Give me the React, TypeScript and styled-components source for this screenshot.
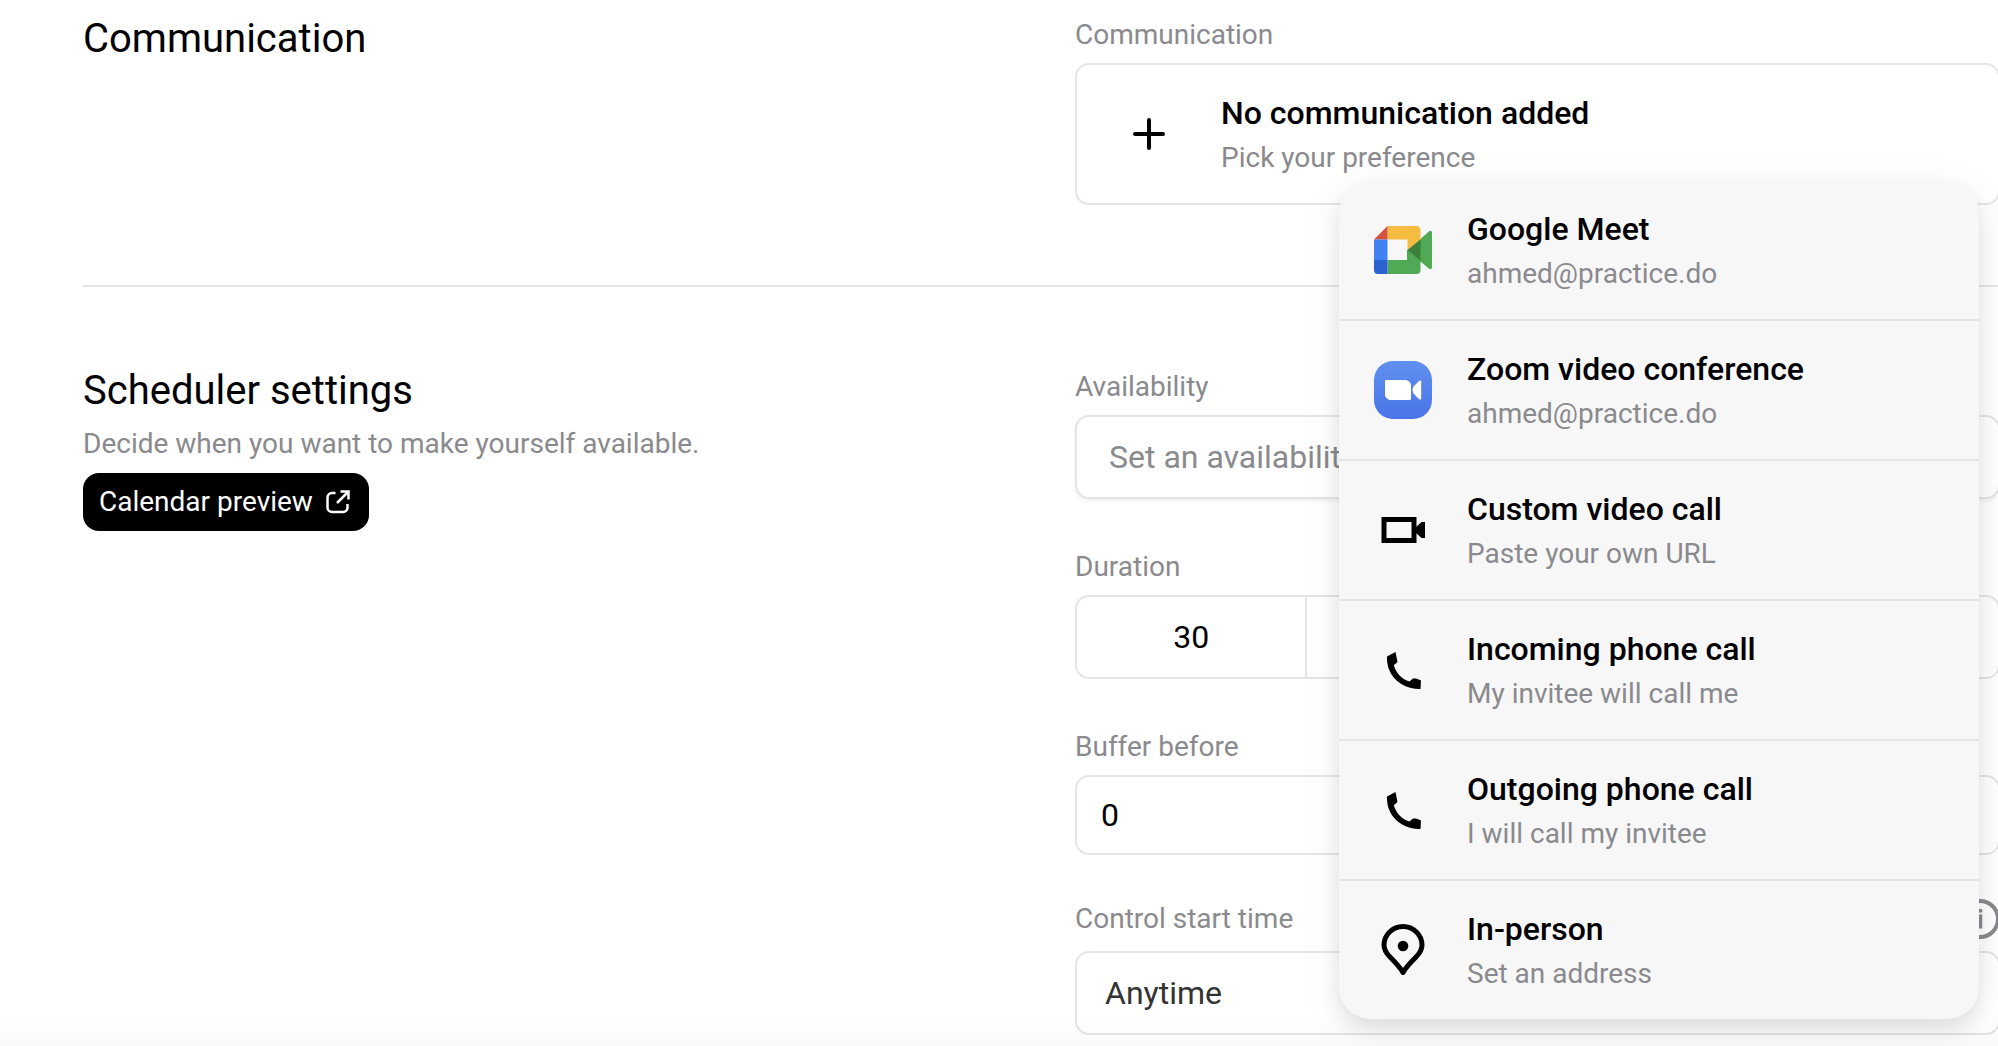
import React from "react";
import styled, { createGlobalStyle, css } from "styled-components";

const color = {
  ink: "#000",
  muted: "#8a8a8e",
  line: "#e5e5e5",
  coolLine: "#e5e5ea",
  menu: "#f7f7f7",
};

const GlobalStyle = createGlobalStyle`
  *, *::before, *::after { box-sizing: border-box; }
  body {
    margin: 0;
    background: #fff;
    color: ${color.ink};
    font-family: Roboto, "Liberation Sans", sans-serif;
    overflow: hidden;
  }
  button, input, select { font: inherit; color: inherit; margin: 0; }
`;

const Page = styled.main`
  position: relative;
  height: 100vh;
  overflow: hidden;
  padding-left: 83px;
`;

const Section = styled.section<{ $first?: boolean }>`
  display: grid;
  grid-template-columns: 992px minmax(0, 1fr);
  margin-right: -2px;
  padding: ${(p) => (p.$first ? "11px 0 80px" : "76px 0 80px")};
  ${(p) =>
    p.$first &&
    css`
      border-bottom: 2px solid ${color.coolLine};
    `}
`;

const Intro = styled.div`
  display: flex;
  flex-direction: column;
  align-items: flex-start;
  gap: 12px;
  padding-top: 4px;
`;

const Heading = styled.h2`
  margin: 0;
  font-size: 40px;
  line-height: 48px;
  font-weight: 400;
`;

const Lead = styled.p`
  margin: 0;
  font-size: 28px;
  line-height: 34px;
  color: ${color.muted};
`;

const PreviewButton = styled.button`
  display: flex;
  align-items: center;
  gap: 12px;
  height: 58px;
  padding: 0 18px 0 16px;
  border: 0;
  border-radius: 16px;
  background: #000;
  color: #fff;
  font-size: 28px;
  line-height: 34px;
`;

const Fields = styled.div`
  display: flex;
  flex-direction: column;
  gap: 44px;
`;

const Field = styled.div`
  position: relative;
  display: flex;
  flex-direction: column;
  gap: 12px;
`;

const LabelRow = styled.div<{ $hint?: boolean }>`
  display: flex;
  justify-content: space-between;
  align-items: ${(p) => (p.$hint ? "center" : "flex-end")};
  height: 40px;
  color: ${color.muted};
`;

const Label = styled.label`
  font-size: 28px;
  line-height: 32px;
`;

const boxed = css`
  width: 100%;
  border: 2px solid ${color.line};
  border-radius: 14px;
  background: #fff;
  font-size: 32px;
  line-height: 40px;
  outline: none;
`;

const Picker = styled.button`
  ${boxed}
  display: flex;
  align-items: center;
  height: 142px;
  padding: 0 42px;
  gap: 42px;
  border-color: ${color.coolLine};
  text-align: left;
`;

const Select = styled.select<{ $placeholder?: boolean }>`
  ${boxed}
  appearance: none;
  height: 84px;
  padding: 0 ${(p) => (p.$placeholder ? 32 : 28)}px;
  color: ${(p) => (p.$placeholder ? color.muted : "#333")};
  ${(p) => p.$placeholder && "box-shadow: 0 2px 4px rgba(0, 0, 0, 0.06);"}
`;

const TextBox = styled.input`
  ${boxed}
  height: 80px;
  padding: 0 24px;
`;

const Segments = styled.div`
  ${boxed}
  display: grid;
  grid-template-columns: repeat(4, 1fr);
  height: 84px;
`;

const SegmentInput = styled.input`
  min-width: 0;
  border: 0;
  border-right: 2px solid ${color.line};
  border-radius: 12px 0 0 12px;
  background: transparent;
  text-align: center;
  outline: none;
`;

const IconSlot = styled.span`
  flex: none;
  display: flex;
  align-items: center;
  justify-content: center;
  width: 60px;
  svg { display: block; }
`;

const Texts = styled.span`
  display: flex;
  flex-direction: column;
  gap: 10px;
`;

const Title = styled.span`
  font-size: 32px;
  line-height: 38px;
  font-weight: 500;
  color: ${color.ink};
`;

const Detail = styled.span`
  font-size: 28px;
  line-height: 32px;
  color: ${color.muted};
`;

const Menu = styled.ul`
  position: absolute;
  top: 170px;
  right: 21px;
  z-index: 2;
  width: 640px;
  margin: 0;
  padding: 0;
  list-style: none;
  overflow: hidden;
  border-radius: 32px;
  background: ${color.menu};
  box-shadow: 0 10px 20px rgba(0, 0, 0, 0.1), 0 8px 48px rgba(0, 0, 0, 0.05);
`;

const MenuItem = styled.li`
  & + & { border-top: 2px solid ${color.line}; }
`;

const MenuButton = styled.button`
  display: flex;
  align-items: center;
  gap: 34px;
  width: 100%;
  height: 138px;
  padding: 0 34px;
  border: 0;
  background: transparent;
  text-align: left;
`;

const BottomFade = styled.div`
  position: absolute;
  inset: auto 0 0;
  height: 32px;
  background: linear-gradient(rgba(0, 0, 0, 0), rgba(0, 0, 0, 0.02));
  pointer-events: none;
`;

const MeetIcon = () => (
  <svg width="58" height="48" viewBox="0 0 58 48">
    <path fill="#4fa955" d="M13.500 34H33V24l13-10.500L54.500 5.700C56.500 4 58 4.800 58 7v34c0 2.200-1.500 3-3.500 1.300L46.500 35.500V44a4 4 0 0 1-4 4h-29z" />
    <path fill="#f6bc42" d="M13.500 0h29a4 4 0 0 1 4 4v9.500L33.500 24.500V13.500h-20z" />
    <path fill="#d85140" d="M13.500 0v13.500H0z" />
    <path fill="#4281f4" d="M0 13.500h13.500V34H0z" />
    <path fill="#2a63d0" d="M0 34h13.500v14H4a4 4 0 0 1-4-4z" />
    <path fill="#3a8139" d="M33.500 24l13-10.500v21.500z" />
  </svg>
);

const ZoomIcon = () => (
  <svg width="58" height="58" viewBox="0 0 58 58">
    <defs>
      <linearGradient id="zoomFill" x1="0" y1="0" x2="0" y2="1">
        <stop offset="0" stopColor="#6090ef" />
        <stop offset="1" stopColor="#4a73e8" />
      </linearGradient>
    </defs>
    <rect width="58" height="58" rx="19" fill="url(#zoomFill)" />
    <path fill="#fff" d="M11 20.500c0-1 .6-1.500 1.500-1.500H31c3.500 0 6 2.500 6 6v12.500c0 1-.6 1.500-1.500 1.500H17c-3.500 0-6-2.500-6-6z" />
    <path fill="#fff" d="M45 20c1-1 2.200-.6 2.200.8v16.400c0 1.400-1.200 1.800-2.200.8l-3.500-3.500c-4-3-4-8 0-11z" />
  </svg>
);

const VideoIcon = () => (
  <svg width="44" height="28" viewBox="0 0 44 28">
    <path fill="none" stroke="#000" strokeWidth="5" d="M3 3.500h30v21H3z" />
    <path d="M34 12l6.500-6H44v16h-3.500L34 16z" />
  </svg>
);

const PhoneIcon = () => (
  <svg width="36" height="37" viewBox="-2 0 36 37">
    <path d="M0 4.500 8.500 0 10.500 10 6.800 13.200C9 21 15 27.500 22.500 29.500L26 26.500c2.500-.3 5 .2 8 2L33.500 37C15 37.500-1 24 0 4.500z" />
  </svg>
);

const PinIcon = () => (
  <svg width="44" height="52" viewBox="0 0 44 52">
    <path
      fill="none"
      stroke="#000"
      strokeWidth="5"
      strokeLinejoin="round"
      d="M22 48.500C19 43 14.500 38.500 9 33 5 29 3 25.500 3 21a19 18.500 0 0 1 38 0c0 4.500-2 8-6 12-5.500 5.500-10 10-13 15.500z"
    />
    <circle cx="22" cy="22" r="5.300" />
  </svg>
);

const PlusIcon = () => (
  <svg width="32" height="32" viewBox="0 0 32 32" stroke="#000" strokeWidth="4" strokeLinecap="round">
    <path d="M16 2v28M2 16h28" />
  </svg>
);

const ExternalIcon = () => (
  <svg width="26" height="26" viewBox="-1 -1 26 26" fill="none" stroke="#fff" strokeWidth="2.500">
    <path d="M9.500 3H6a4.500 4.500 0 0 0-4.500 4.500v10A4.500 4.500 0 0 0 6 22h11a4.500 4.500 0 0 0 4.500-4.500V14" />
    <path d="M14.500 1.500h8v8M22 2 11 13" />
  </svg>
);

const InfoIcon = () => (
  <svg width="40" height="40" viewBox="0 0 40 40" fill="none" stroke="currentColor" strokeWidth="4">
    <circle cx="20" cy="20" r="18" />
    <path strokeWidth="3.500" d="M20.500 15.500v14M20.500 10v3.500" />
  </svg>
);

const options = [
  { icon: <MeetIcon />, title: "Google Meet", detail: "ahmed@practice.do" },
  { icon: <ZoomIcon />, title: "Zoom video conference", detail: "ahmed@practice.do" },
  { icon: <VideoIcon />, title: "Custom video call", detail: "Paste your own URL" },
  { icon: <PhoneIcon />, title: "Incoming phone call", detail: "My invitee will call me" },
  { icon: <PhoneIcon />, title: "Outgoing phone call", detail: "I will call my invitee" },
  { icon: <PinIcon />, title: "In-person", detail: "Set an address" },
];

export default function App() {
  return (
    <Page>
      <GlobalStyle />
      <Section $first>
        <Intro>
          <Heading>Communication</Heading>
        </Intro>
        <Fields>
          <Field>
            <LabelRow>
              <Label htmlFor="communication">Communication</Label>
            </LabelRow>
            <Picker id="communication" type="button">
              <IconSlot>
                <PlusIcon />
              </IconSlot>
              <Texts>
                <Title>No communication added</Title>
                <Detail>Pick your preference</Detail>
              </Texts>
            </Picker>
            <Menu>
              {options.map((option) => (
                <MenuItem key={option.title}>
                  <MenuButton type="button">
                    <IconSlot>{option.icon}</IconSlot>
                    <Texts>
                      <Title>{option.title}</Title>
                      <Detail>{option.detail}</Detail>
                    </Texts>
                  </MenuButton>
                </MenuItem>
              ))}
            </Menu>
          </Field>
        </Fields>
      </Section>
      <Section>
        <Intro>
          <Heading>Scheduler settings</Heading>
          <Lead>Decide when you want to make yourself available.</Lead>
          <PreviewButton type="button">
            Calendar preview
            <ExternalIcon />
          </PreviewButton>
        </Intro>
        <Fields>
          <Field>
            <LabelRow>
              <Label htmlFor="availability">Availability</Label>
            </LabelRow>
            <Select id="availability" $placeholder>
              <option>Set an availability</option>
            </Select>
          </Field>
          <Field>
            <LabelRow>
              <Label htmlFor="duration">Duration</Label>
            </LabelRow>
            <Segments>
              <SegmentInput id="duration" defaultValue="30" />
            </Segments>
          </Field>
          <Field>
            <LabelRow>
              <Label htmlFor="buffer">Buffer before</Label>
            </LabelRow>
            <TextBox id="buffer" defaultValue="0" />
          </Field>
          <Field>
            <LabelRow $hint>
              <Label htmlFor="start">Control start time</Label>
              <InfoIcon />
            </LabelRow>
            <Select id="start">
              <option>Anytime</option>
            </Select>
          </Field>
        </Fields>
      </Section>
      <BottomFade />
    </Page>
  );
}
